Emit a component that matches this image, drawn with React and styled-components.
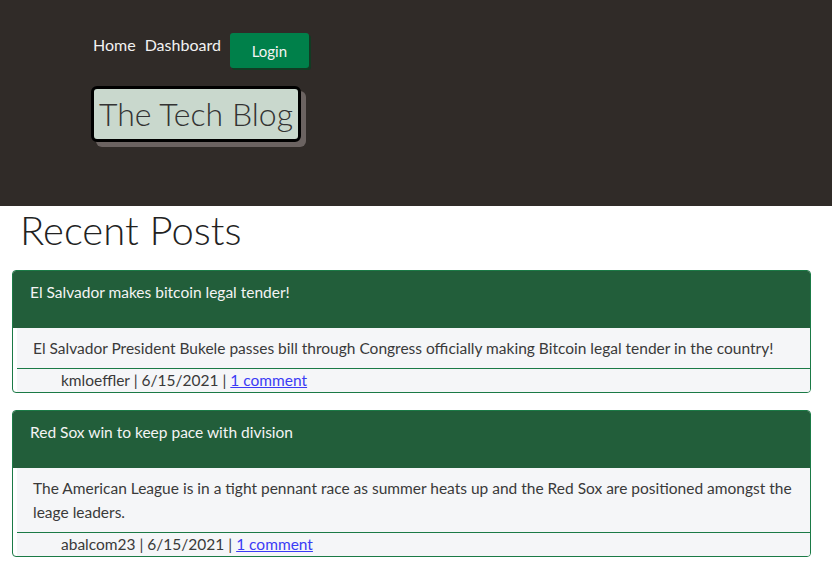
import React from "react";
import styled, { createGlobalStyle } from "styled-components";

const posts = [
  {
    title: "El Salvador makes bitcoin legal tender!",
    body: "El Salvador President Bukele passes bill through Congress officially making Bitcoin legal tender in the country!",
    author: "kmloeffler",
    date: "6/15/2021",
    comments: "1 comment",
  },
  {
    title: "Red Sox win to keep pace with division",
    body: "The American League is in a tight pennant race as summer heats up and the Red Sox are positioned amongst the leage leaders.",
    author: "abalcom23",
    date: "6/15/2021",
    comments: "1 comment",
  },
];

const App = () => {
  return (
    <>
      <GlobalStyle />
      <Header>
        <Nav>
          <NavLink>Home</NavLink>
          <NavLink>Dashboard</NavLink>
          <LoginButton>Login</LoginButton>
        </Nav>
        <TitleBox>The Tech Blog</TitleBox>
      </Header>
      <Main>
        <PageTitle>Recent Posts</PageTitle>
        <PostList>
          {posts.map((post) => (
            <Card key={post.title}>
              <CardHeader>{post.title}</CardHeader>
              <CardBody>{post.body}</CardBody>
              <CardFooter>
                {post.author} | {post.date} | <CommentLink href="#">{post.comments}</CommentLink>
              </CardFooter>
            </Card>
          ))}
        </PostList>
      </Main>
    </>
  );
};

export default App;

const GlobalStyle = createGlobalStyle`
  body {
    margin: 0;
    background: #ffffff;
    font-family: Lato, "Open Sans", sans-serif;
    color: #333333;
  }
  * {
    box-sizing: border-box;
  }
`;

const Header = styled.header`
  height: 206px;
  background: #302b28;
  padding: 33px 0 0 91px;
`;

const Nav = styled.nav`
  display: flex;
  align-items: flex-start;
`;

const NavLink = styled.span`
  font-size: 16px;
  color: #f2f2f2;
  padding: 2px 0 0 2px;
  margin-right: 7px;
  line-height: 20px;
`;

const LoginButton = styled.button`
  width: 79px;
  height: 35px;
  margin-left: 2px;
  border: none;
  border-radius: 3px;
  background: #00804a;
  color: #f4f4f4;
  font-family: Lato, sans-serif;
  font-size: 15px;
  box-shadow: 2px 2px 0 #123b23;
  padding: 1px 0 0;
`;

const TitleBox = styled.div`
  display: inline-block;
  margin-top: 18px;
  width: 210px;
  height: 56px;
  border: 3px solid #000;
  border-radius: 6px;
  background: #c9d8cd;
  box-shadow: 5px 5px 0 #6b6361;
  font-family: Lato, sans-serif;
  font-weight: 300;
  font-size: 32px;
  line-height: 50px;
  color: #333;
  text-align: center;
`;

const Main = styled.main`
  padding: 0 21px 0 12px;
`;

const PageTitle = styled.h1`
  margin: 0 0 16px 8px;
  font-weight: 300;
  font-size: 40px;
  line-height: 48px;
  color: #222;
`;

const PostList = styled.div`
  display: flex;
  flex-direction: column;
  gap: 17px;
`;

const Card = styled.article`
  border: 1px solid #1b7a46;
  border-radius: 4px;
  overflow: hidden;
  background: #fff;
  font-size: 15.5px;
`;

const CardHeader = styled.div`
  height: 57px;
  background: #225e3a;
  color: #f4f4f4;
  padding: 11px 17px;
  line-height: 20px;
`;

const CardBody = styled.div`
  margin-left: 4px;
  background: #f5f6f8;
  padding: 8px 16px;
  line-height: 24px;
  color: #3a3a3a;
  border-bottom: 1px solid #1b7a46;
`;

const CardFooter = styled.div`
  margin-left: 4px;
  background: #f5f6f8;
  padding: 0 0 0 44px;
  line-height: 23px;
  color: #3a3a3a;
`;

const CommentLink = styled.a`
  color: #3b3bf5;
`;
